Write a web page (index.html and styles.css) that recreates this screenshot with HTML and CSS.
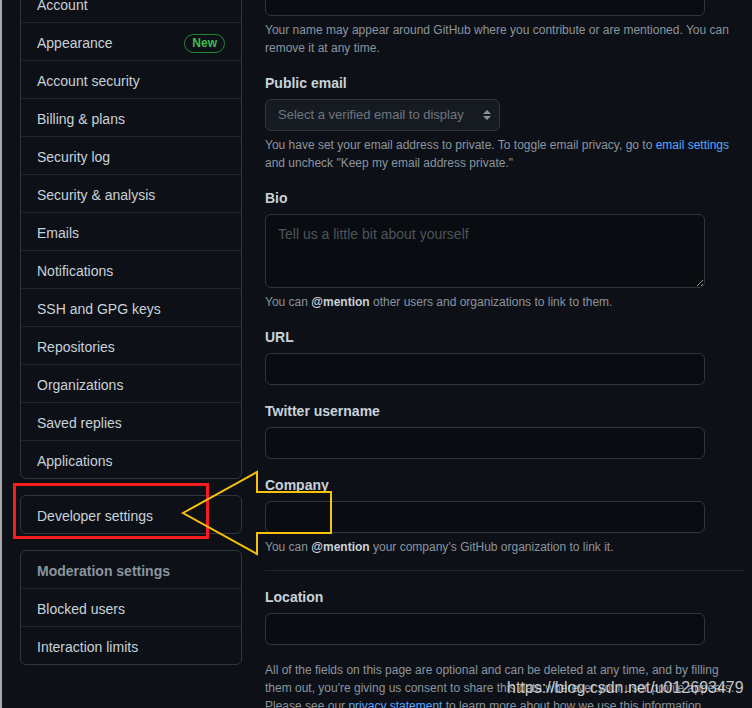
FILE: index.html
```html
<!DOCTYPE html>
<html>
<head>
	<meta charset="utf-8">
	<meta name="viewport" content="width=device-width, initial-scale=1">
	<title>Public profile</title>
	<link rel="stylesheet" href="styles.css">
</head>
<body>
	<div class=layout>
		<aside class=sidebar>
			<nav class=menu>
				<a class=menu-item href="#">Account</a>
				<a class=menu-item href="#">Appearance <span class=badge>New</span></a>
				<a class=menu-item href="#">Account security</a>
				<a class=menu-item href="#">Billing &amp; plans</a>
				<a class=menu-item href="#">Security log</a>
				<a class=menu-item href="#">Security &amp; analysis</a>
				<a class=menu-item href="#">Emails</a>
				<a class=menu-item href="#">Notifications</a>
				<a class=menu-item href="#">SSH and GPG keys</a>
				<a class=menu-item href="#">Repositories</a>
				<a class=menu-item href="#">Organizations</a>
				<a class=menu-item href="#">Saved replies</a>
				<a class=menu-item href="#">Applications</a>
			</nav>
			<nav class=menu>
				<a class=menu-item href="#">Developer settings</a>
			</nav>
			<nav class=menu>
				<div class="menu-item menu-heading">Moderation settings</div>
				<a class=menu-item href="#">Blocked users</a>
				<a class=menu-item href="#">Interaction limits</a>
			</nav>
		</aside>

		<form class=profile>
			<div class=field>
				<input class=input type=text name=name>
				<p class=note>Your name may appear around GitHub where you contribute or are mentioned. You can remove it at any time.</p>
			</div>
			<div class=field>
				<label class=field-label>Public email</label>
				<span class=select-wrap>
					<select class=select>
						<option>Select a verified email to display</option>
					</select>
					<svg class=select-arrows width="8" height="12" viewBox="0 0 8 12"><polygon points="0,5 4,1 8,5"/><polygon points="0,7 4,11 8,7"/></svg>
				</span>
				<p class=note>You have set your email address to private. To toggle email privacy, go to <a href="#">email settings</a> and uncheck "Keep my email address private."</p>
			</div>
			<div class=field>
				<label class=field-label>Bio</label>
				<textarea class="input bio" placeholder="Tell us a little bit about yourself"></textarea>
				<p class=note>You can <strong>@mention</strong> other users and organizations to link to them.</p>
			</div>
			<div class=field>
				<label class=field-label>URL</label>
				<input class=input type=text name=url>
			</div>
			<div class=field>
				<label class=field-label>Twitter username</label>
				<input class=input type=text name=twitter>
			</div>
			<div class=field>
				<label class=field-label>Company</label>
				<input class=input type=text name=company>
				<p class=note>You can <strong>@mention</strong> your company’s GitHub organization to link it.</p>
			</div>
			<hr>
			<div class=field>
				<label class=field-label>Location</label>
				<input class=input type=text name=location>
			</div>
			<p class="note note-end">All of the fields on this page are optional and can be deleted at any time, and by filling them out, you're giving us consent to share this data wherever your user profile appears. Please see our <a href="#">privacy statement</a> to learn more about how we use this information.</p>
		</form>
	</div>

	<!-- screenshot markup -->
	<svg class=marks width="752" height="708" viewBox="0 0 752 708">
		<rect class=mark-box x="14.5" y="484.5" width="193" height="53"/>
		<polygon class=mark-arrow points="183,513 257,472 257,492 331,492 331,533 257,533 257,554"/>
	</svg>
	<div class=watermark>https://blog.csdn.net/u012693479</div>
</body>
</html>
```

FILE: styles.css
```css
* {
	box-sizing: border-box;
}
html {
	overflow: hidden;
	background: linear-gradient(to right, #a9a9a9 2px, #0d1117 2px);
}
body {
	margin: 0;
	color: #c9d1d9;
	font-family: "Liberation Sans", Arial, sans-serif;
	font-size: 14px;
	line-height: 1.5;
}
a {
	color: #58a6ff;
	text-decoration: none;
}
.layout {
	display: grid;
	grid-template-columns: 222px 480px;
	column-gap: 23px;
	align-items: start;
	margin-top: -16px;
	padding-left: 20px;
}
.menu {
	border: 1px solid #30363d;
	border-radius: 6px;
	margin-bottom: 16px;
}
.menu-item {
	display: flex;
	align-items: center;
	justify-content: space-between;
	padding: 10px 16px 7px;
	line-height: 20px;
	color: #c9d1d9;
}
.menu-item + .menu-item {
	border-top: 1px solid #21262d;
}
.menu-heading {
	color: #8b949e;
	font-weight: 600;
}
.badge {
	padding: 0 7px;
	font-size: 12px;
	font-weight: 600;
	line-height: 17px;
	color: #3fb950;
	border: 1px solid #238636;
	border-radius: 2em;
}
.profile {
	display: flex;
	flex-direction: column;
	gap: 16px;
	margin: 0;
}
.field-label {
	display: block;
	font-weight: 600;
	line-height: 20px;
	margin-bottom: 6px;
}
.input {
	display: block;
	width: 440px;
	height: 32px;
	padding: 5px 12px;
	font: inherit;
	line-height: 20px;
	color: #c9d1d9;
	background: #090c10;
	border: 1px solid #30363d;
	border-radius: 6px;
	color-scheme: dark;
}
.input::placeholder {
	color: #4d545c;
}
.bio {
	height: 74px;
	padding: 9px 12px;
	resize: vertical;
}
.select-wrap {
	position: relative;
	display: block;
	width: 235px;
}
.select {
	display: block;
	width: 235px;
	height: 32px;
	padding: 5px 20px 5px 12px;
	font: inherit;
	font-size: 13px;
	line-height: 20px;
	color: #6e7681;
	background: #161b22;
	border: 1px solid #30363d;
	border-radius: 6px;
	appearance: none;
}
.select-arrows {
	position: absolute;
	top: 10px;
	right: 9px;
	fill: #8b949e;
}
.note {
	margin: 5px 0 0;
	font-size: 12px;
	line-height: 18px;
	color: #8b949e;
}
.note-end {
	margin: 0;
}
.note strong {
	color: #c9d1d9;
	font-weight: 600;
}
hr {
	margin: -2px 0 0;
	height: 0;
	border: 0;
	border-top: 1px solid #21262d;
}
.marks {
	position: absolute;
	top: 0;
	left: 0;
	pointer-events: none;
}
.mark-box {
	fill: none;
	stroke: #f51d1d;
	stroke-width: 3;
}
.mark-arrow {
	fill: none;
	stroke: #f8c10c;
	stroke-width: 2;
}
.watermark {
	position: absolute;
	top: 679px;
	left: 507px;
	font-family: "Liberation Sans", Arial, sans-serif;
	font-size: 16px;
	line-height: 18px;
	color: rgba(228, 228, 228, 0.85);
	white-space: nowrap;
}
```
